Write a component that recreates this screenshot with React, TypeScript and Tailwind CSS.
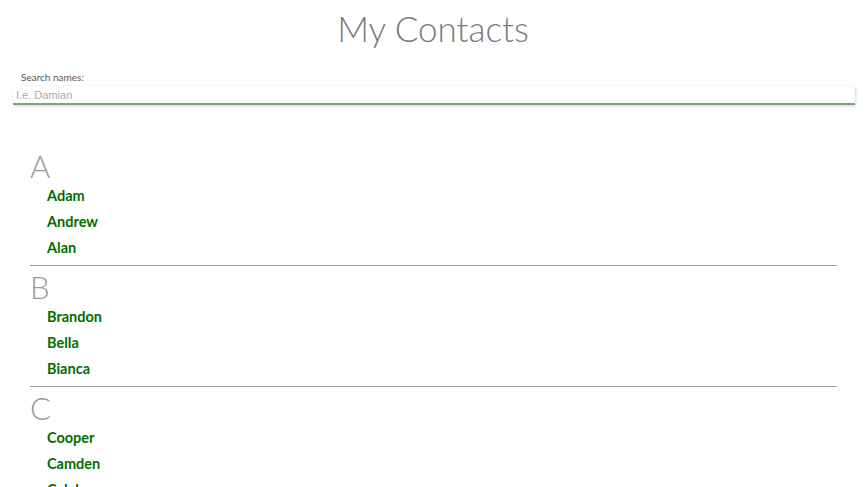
const groups = [
  { letter: "A", names: ["Adam", "Andrew", "Alan"] },
  { letter: "B", names: ["Brandon", "Bella", "Bianca"] },
  { letter: "C", names: ["Cooper", "Camden", "Caleb"] },
];

export default function App() {
  return (
    <div className="min-h-screen bg-white font-['Lato',sans-serif]">
      <h1 className="pt-[6px] text-center text-[35px] leading-[44px] font-light text-[#7a7a7a]">
        My Contacts
      </h1>

      <div className="mt-[20px]">
        <label htmlFor="search" className="ml-[21px] block text-[10px] leading-[14px] text-[#555]">
          Search names:
        </label>
        <input
          id="search"
          type="text"
          placeholder="I.e. Damian"
          className="mt-[2px] ml-[13px] block h-[19px] w-[842px] border-b-2 border-[#76a776] pl-[3px] font-['Liberation_Sans',sans-serif] text-[11px] outline-none shadow-[1px_1px_3px_rgba(0,0,0,0.18)] placeholder:text-[#aaa]"
        />
      </div>

      <div className="mt-[40px] mr-[29px] ml-[30px]">
        {groups.map((g, i) => (
          <section
            key={g.letter}
            className={i > 0 ? "border-t border-[#999] pt-[4px] pb-[4px]" : "pt-[4px] pb-[4px]"}
          >
            <div className="h-[34px] text-[31px] leading-[34px] font-light text-[#999]">{g.letter}</div>
            <ul className="pl-[17px]">
              {g.names.map((n) => (
                <li key={n} className="text-[14.5px] leading-[26px] font-bold text-[#006e00]">
                  {n}
                </li>
              ))}
            </ul>
          </section>
        ))}
      </div>
    </div>
  );
}
